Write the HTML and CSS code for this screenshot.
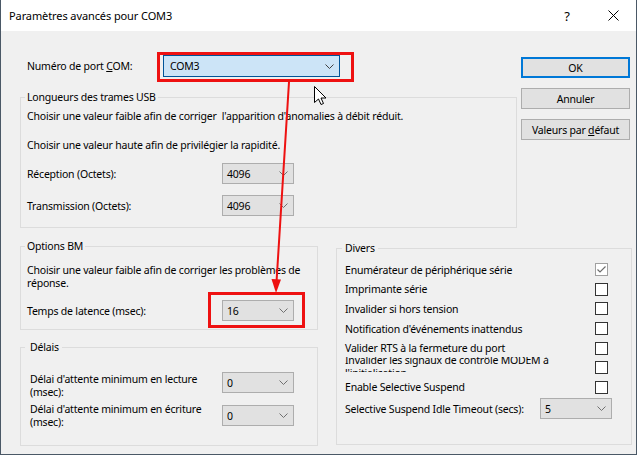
FILE: index.html
```html
<!DOCTYPE html>
<html lang="fr">
<head>
<meta charset="utf-8">
<title>Paramètres avancés pour COM3</title>
<link rel="stylesheet" href="styles.css">
</head>
<body>
<div class="window">
  <div class="titlebar">
    <span class="title">Paramètres avancés pour COM3</span>
    <span class="tbbtn help">?</span>
    <span class="tbbtn close"><svg width="11" height="11" viewBox="0 0 11 11"><path d="M0.5 0.5 L10.5 10.5 M10.5 0.5 L0.5 10.5" stroke="#000" stroke-width="1" fill="none"/></svg></span>
  </div>
  <div class="client">
    <div class="top">
      <div class="main">
        <div class="port-row">
          <span class="lbl">Numéro de port <u>C</u>OM:</span>
          <div class="combo focus"><span>COM3</span><svg class="chev" width="9" height="5" viewBox="0 0 9 5"><path d="M0.5 0.5 L4.5 4.5 L8.5 0.5" stroke="#404040" fill="none"/></svg></div>
        </div>
        <div class="group usb">
          <span class="legend">Longueurs des trames USB</span>
          <div class="t1">Choisir une valeur faible afin de corriger&nbsp; l'apparition d'anomalies à débit réduit.</div>
          <div class="t2">Choisir une valeur haute afin de privilégier la rapidité.</div>
          <div class="row r1"><span class="lbl">Réception (Octets):</span><div class="combo"><span>4096</span><svg class="chev" width="9" height="5" viewBox="0 0 9 5"><path d="M0.5 0.5 L4.5 4.5 L8.5 0.5" stroke="#707070" fill="none"/></svg></div></div>
          <div class="row r2"><span class="lbl">Transmission (Octets):</span><div class="combo"><span>4096</span><svg class="chev" width="9" height="5" viewBox="0 0 9 5"><path d="M0.5 0.5 L4.5 4.5 L8.5 0.5" stroke="#707070" fill="none"/></svg></div></div>
        </div>
      </div>
      <div class="buttons">
        <div class="btn default"><span>OK</span></div>
        <div class="btn"><span>Annuler</span></div>
        <div class="btn"><span>Valeurs par <u>d</u>éfaut</span></div>
      </div>
    </div>
    <div class="bottom">
      <div class="col-left">
        <div class="group bm">
          <span class="legend">Options BM</span>
          <div class="bm-text">Choisir une valeur faible afin de corriger les problèmes de<br>réponse.</div>
          <div class="row lat"><span class="lbl">Temps de latence (msec):</span><div class="combo"><span>16</span><svg class="chev" width="9" height="5" viewBox="0 0 9 5"><path d="M0.5 0.5 L4.5 4.5 L8.5 0.5" stroke="#707070" fill="none"/></svg></div></div>
        </div>
        <div class="group delais">
          <span class="legend">Délais</span>
          <div class="drow d1"><span class="lbl">Délai d'attente minimum en lecture<br>(msec):</span><div class="combo"><span>0</span><svg class="chev" width="9" height="5" viewBox="0 0 9 5"><path d="M0.5 0.5 L4.5 4.5 L8.5 0.5" stroke="#707070" fill="none"/></svg></div></div>
          <div class="drow d2"><span class="lbl">Délai d'attente minimum en écriture<br>(msec):</span><div class="combo"><span>0</span><svg class="chev" width="9" height="5" viewBox="0 0 9 5"><path d="M0.5 0.5 L4.5 4.5 L8.5 0.5" stroke="#707070" fill="none"/></svg></div></div>
        </div>
      </div>
      <div class="group divers">
        <span class="legend">Divers</span>
        <div class="crow first"><span class="lbl">Enumérateur de périphérique série</span><span class="cb disabled"><svg width="11" height="11" viewBox="0 0 11 11"><path d="M1.5 5.5 L4 8 L9.5 2.5" stroke="#6d6d6d" stroke-width="1.2" fill="none"/></svg></span></div>
        <div class="crow"><span class="lbl">Imprimante série</span><span class="cb"></span></div>
        <div class="crow"><span class="lbl">Invalider si hors tension</span><span class="cb"></span></div>
        <div class="crow"><span class="lbl">Notification d'événements inattendus</span><span class="cb"></span></div>
        <div class="crow"><span class="lbl">Valider RTS à la fermeture du port</span><span class="cb"></span></div>
        <div class="crow"><span class="lbl clip"><span class="clip-inner">Invalider les signaux de contrôle MODEM à<br>l'initialisation</span></span><span class="cb"></span></div>
        <div class="crow"><span class="lbl">Enable Selective Suspend</span><span class="cb"></span></div>
        <div class="row idle"><span class="lbl">Selective Suspend Idle Timeout (secs):</span><div class="combo"><span>5</span><svg class="chev" width="9" height="5" viewBox="0 0 9 5"><path d="M0.5 0.5 L4.5 4.5 L8.5 0.5" stroke="#707070" fill="none"/></svg></div></div>
      </div>
    </div>
  </div>
  <svg class="annot" width="637" height="455" viewBox="0 0 637 455">
    <rect x="158.5" y="53.5" width="194" height="27" fill="none" stroke="#ee1111" stroke-width="3"/>
    <rect x="209.5" y="293.5" width="94" height="33" fill="none" stroke="#ee1111" stroke-width="3"/>
    <line x1="289" y1="82" x2="276.5" y2="282" stroke="#ee1111" stroke-width="2"/>
    <polygon points="276,293 271.5,279 281,279.5" fill="#ee1111"/>
    <path transform="translate(314.5,86.5)" d="M0 0 V16 L4 12.5 L6.5 18 L9 17 L6.5 11.5 H11.5 Z" fill="#fff" stroke="#000" stroke-width="1" stroke-linejoin="miter"/>
  </svg>
</div>
</body>
</html>
```
FILE: styles.css
```css
* { box-sizing: border-box; }
html, body { margin: 0; padding: 0; }
body {
  width: 637px;
  height: 455px;
  overflow: hidden;
  background: #f0f0f0;
  font-family: "Noto Sans", "Liberation Sans", sans-serif;
  font-size: 10.5px;
  letter-spacing: -0.2px;
  color: #000;
  white-space: nowrap;
}
.window {
  position: relative;
  width: 637px;
  height: 455px;
  border: 1px solid #4a5866;
  border-top: none;
  background: #f0f0f0;
}
.titlebar {
  height: 31px;
  background: #fff;
  display: flex;
  align-items: center;
  padding-left: 8px;
}
.title { flex: 1; font-size: 11px; letter-spacing: -0.1px; }
.tbbtn {
  width: 46px;
  height: 31px;
  display: flex;
  align-items: center;
  justify-content: center;
}
.help { font-size: 13px; }
.client { padding: 0 6px 0 19px; }
.top { display: flex; }
.main { width: 497px; }
.port-row {
  display: flex;
  align-items: center;
  margin-top: 24px;
  height: 22px;
  padding-left: 7px;
}
.port-row .lbl { width: 136px; }
.combo {
  height: 21px;
  width: 72px;
  flex: none;
  border: 1px solid #adadad;
  background: #e1e1e1;
  display: flex;
  align-items: center;
  justify-content: space-between;
  padding: 0 5px 0 4px;
}
.combo.focus {
  width: 177px;
  height: 22px;
  border-color: #005499;
  background: #cce4f7;
  padding: 0 5px 0 6px;
}
.buttons {
  width: 109px;
  margin-left: 4px;
  margin-top: 26px;
  display: flex;
  flex-direction: column;
  gap: 10px;
}
.btn {
  height: 21px;
  border: 1px solid #adadad;
  background: #e1e1e1;
  display: flex;
  align-items: center;
  justify-content: center;
}
.btn.default { border: 2px solid #0078d7; }

.group { border: 1px solid #dcdcdc; }
.legend {
  display: block;
  width: max-content;
  margin: -8px 0 0 -2px;
  padding: 0 2px;
  background: #f0f0f0;
  line-height: 15px;
}
.row { display: flex; align-items: center; }
.lbl { flex: none; }

.usb { margin-top: 20px; height: 131px; padding-left: 6px; }
.usb .t1 { margin-top: 3px; line-height: 16px; }
.usb .t2 { margin-top: 13px; line-height: 16px; }
.usb .row { height: 21px; }
.usb .r1 { margin-top: 10px; }
.usb .r2 { margin-top: 11px; }
.usb .row .lbl { width: 195px; }

.bottom { display: flex; align-items: flex-start; }
.col-left { width: 298px; flex: none; }
.bm { margin-top: 18px; height: 84px; padding-left: 6px; }
.bm-text { margin-top: 10px; line-height: 13px; }
.bm .lat { margin-top: 10px; height: 21px; }
.bm .lat .lbl { width: 195px; }

.delais { margin-top: 17px; height: 99px; padding-left: 9px; }
.delais .legend { margin-left: -5px; padding: 0 3px 0 5px; }
.drow { display: flex; align-items: flex-start; }
.drow .lbl { width: 192px; line-height: 13px; }
.d1 { margin-top: 17px; }
.d1 .lbl { padding-top: 1px; }
.d2 { margin-top: 4px; }
.d2 .combo { margin-top: 2px; }

.divers {
  margin-left: 18px;
  margin-top: 20px;
  width: 296px;
  height: 197px;
  padding-left: 8px;
  flex: none;
}
.divers .legend { margin-left: -3px; padding: 0 3px; }
.crow { height: 19.6px; display: flex; align-items: center; }
.crow.first { margin-top: 4px; }
.crow .lbl { width: 250px; }
.cb {
  width: 13px;
  height: 13px;
  flex: none;
  border: 1px solid #333;
  background: #fff;
  display: flex;
  align-items: center;
  justify-content: center;
}
.cb.disabled { border-color: #a0a0a0; }
.cb svg { display: block; }
.clip {
  height: 15px;
  overflow: hidden;
  align-self: flex-start;
  margin-top: -1px;
}
.clip-inner { display: block; line-height: 13px; margin-top: -2.5px; }
.idle { margin-top: 1px; height: 21px; }
.idle .lbl { width: 195px; }

.annot {
  position: absolute;
  left: -1px;
  top: 0;
  pointer-events: none;
}
```
